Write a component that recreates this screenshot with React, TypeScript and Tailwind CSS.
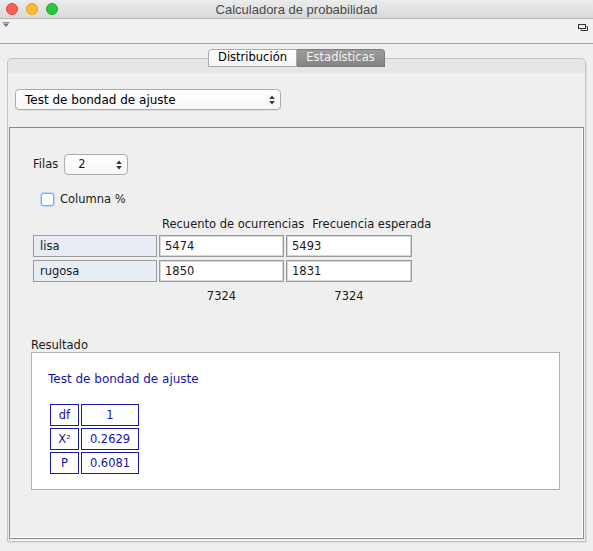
import React from 'react';

const sans = "font-['DejaVu_Sans',sans-serif]";

function UpDownArrows() {
  return (
    <svg width="6" height="10" viewBox="0 0 6 10" className="shrink-0">
      <polygon points="3,0.5 5.8,4 0.2,4" fill="#333" />
      <polygon points="3,9.5 5.8,6 0.2,6" fill="#333" />
    </svg>
  );
}

function ResultRow({ label, value }: { label: string; value: string }) {
  return (
    <div className="flex gap-[2px]">
      <div className="w-[29px] h-[22px] border border-[#1a1aa8] flex items-center justify-center">{label}</div>
      <div className="w-[58px] h-[22px] border border-[#1a1aa8] flex items-center justify-center">{value}</div>
    </div>
  );
}

function DataRow({ label, a, b }: { label: string; a: string; b: string }) {
  return (
    <div className="flex gap-[2px] h-[22px]">
      <div className="w-[124px] border border-[#9c9c9c] bg-[#e7ecf5] flex items-center pl-[6px]">{label}</div>
      <div className="w-[125px] border border-[#9a9a9a] bg-white flex items-center pl-[5px] shadow-[inset_0_0_0_1px_#d6d6d6]">{a}</div>
      <div className="w-[126px] border border-[#9a9a9a] bg-white flex items-center pl-[5px] shadow-[inset_0_0_0_1px_#d6d6d6]">{b}</div>
    </div>
  );
}

export default function App() {
  return (
    <div className={`w-[593px] h-[551px] bg-[#efefef] flex flex-col overflow-hidden text-[11.5px] text-[#1a1a1a] ${sans}`}>
      {/* Title bar */}
      <div className="h-[19px] shrink-0 grid grid-cols-[1fr_auto_1fr] items-center bg-gradient-to-b from-[#ececec] to-[#d9d9d9] border-b border-[#b9b9b9]">
        <div className="flex items-center gap-[8px] pl-[6px]">
          <span className="w-[12px] h-[12px] rounded-full bg-[#fc5f57] border border-[#e0443e]" />
          <span className="w-[12px] h-[12px] rounded-full bg-[#fdbc2e] border border-[#dea123]" />
          <span className="w-[12px] h-[12px] rounded-full bg-[#29c840] border border-[#1aab29]" />
        </div>
        <div className="text-[13px] text-[#4a4a4a] font-['Liberation_Sans',sans-serif] leading-none">Calculadora de probabilidad</div>
        <div />
      </div>

      {/* Toolbar */}
      <div className="h-[25px] shrink-0 flex justify-between border-b border-[#a3a3a3] bg-[#f0f0f0]">
        <svg width="8" height="6" viewBox="0 0 8 6" className="ml-[2px] mt-[3px]">
          <line x1="0.5" y1="0.5" x2="7.5" y2="0.5" stroke="#9a9a9a" />
          <polygon points="1,1.5 7,1.5 4,5" fill="#6e6e6e" />
        </svg>
        <svg width="10" height="7" viewBox="0 0 10 7" className="mr-[5px] mt-[5px]">
          <rect x="0.5" y="0.5" width="7" height="4" fill="none" stroke="#333" />
          <polyline points="8.5,2.5 9.5,2.5 9.5,6.5 3,6.5 3,5.5" fill="none" stroke="#333" />
        </svg>
      </div>

      {/* Tabs and panel */}
      <div className="flex-1 flex flex-col px-[7px] pt-[5px] pb-[9px]">
        <div className="flex justify-center relative z-10 mb-[-9px]">
          <div className="h-[18px] w-[89px] flex items-center justify-center border border-[#a9a9a9] rounded-tl-[4px] bg-gradient-to-b from-white to-[#f4f4f4] text-[11.5px] text-black">
            Distribución
          </div>
          <div className="h-[18px] w-[88px] flex items-center justify-center border border-[#7c7c7c] border-l-0 rounded-tr-[4px] bg-gradient-to-b from-[#9c9c9c] to-[#848484] text-[11.5px] text-[#f2f2f2]">
            Estadísticas
          </div>
        </div>
        <div className="flex-1 flex flex-col border border-[#c4c4c4] rounded-t-[5px] shadow-[1px_1px_1px_rgba(0,0,0,0.08)]">
          <div className="h-[14px] bg-[#e6e6e6] rounded-t-[5px]" />
          <div className="pt-[16px] pl-[7px]">
            <div className="w-[266px] h-[21px] flex items-center justify-between px-[9px] pr-[5px] border border-[#acacac] rounded-[4px] bg-gradient-to-b from-white to-[#f6f6f6] shadow-[0_1px_0_rgba(0,0,0,0.05)] text-[12px] text-black">
              <span>Test de bondad de ajuste</span>
              <UpDownArrows />
            </div>
          </div>

          {/* Inner box */}
          <div className="flex-1 mt-[17px] ml-[1px] mr-[1px] mb-[2px] border border-[#8a8a8a] shadow-[inset_-1px_-1px_0_#ffffff] flex flex-col pl-[23px] pt-[26px]">
            <div className="flex items-center gap-[6px]">
              <span>Filas</span>
              <div className="w-[64px] h-[21px] flex items-center justify-between pl-[13px] pr-[5px] border border-[#acacac] rounded-[4px] bg-gradient-to-b from-white to-[#f6f6f6]">
                <span>2</span>
                <UpDownArrows />
              </div>
            </div>
            <div className="flex items-center gap-[6px] ml-[8px] mt-[16px]">
              <span className="w-[13px] h-[13px] rounded-[3px] border border-[#7aaee6] bg-white shadow-[0_0_0_1px_#b9d7f5]" />
              <span>Columna %</span>
            </div>

            <div className="flex gap-[8px] ml-[129px] mt-[8px] h-[16px] items-center">
              <span>Recuento de ocurrencias</span>
              <span>Frecuencia esperada</span>
            </div>
            <div className="flex flex-col gap-[3px] mt-[3px]">
              <DataRow label="lisa" a="5474" b="5493" />
              <DataRow label="rugosa" a="1850" b="1831" />
            </div>
            <div className="flex ml-[126px] mt-[6px] h-[16px] items-center">
              <span className="w-[125px] text-center">7324</span>
              <span className="w-[130px] text-center">7324</span>
            </div>

            <div className="mt-[34px] ml-[-2px] h-[14px] flex items-center">Resultado</div>
            <div className="mt-[0px] ml-[-2px] w-[529px] h-[138px] border border-[#b3b3b3] bg-white text-[#1515a5] pl-[16px] pt-[19px]">
              <div className="text-[12px] leading-[14px]">Test de bondad de ajuste</div>
              <div className="flex flex-col gap-[2px] mt-[18px] ml-[2px]">
                <ResultRow label="df" value="1" />
                <ResultRow label="X²" value="0.2629" />
                <ResultRow label="P" value="0.6081" />
              </div>
            </div>
          </div>
        </div>
      </div>
    </div>
  );
}
